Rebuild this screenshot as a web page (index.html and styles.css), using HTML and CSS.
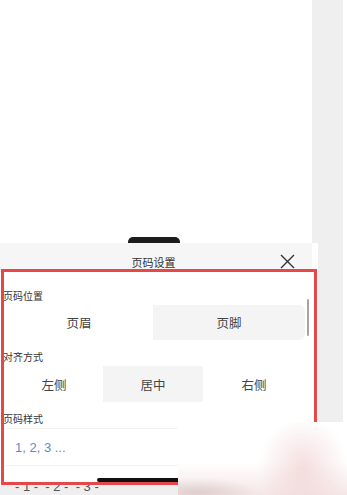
FILE: index.html
```html
<!DOCTYPE html>
<html lang="zh">
<head>
<meta charset="utf-8">
<link rel="stylesheet" href="styles.css">
</head>
<body>
<div class="page">
  <div class="top">
    <div class="pill"></div>
  </div>
  <div class="sheet">
    <div class="sheet-head">
      <span></span>
      <span class="title">页码设置</span>
      <svg class="close" width="15" height="15" viewBox="0 0 15 15"><path d="M1 1 L14 14 M14 1 L1 14" stroke="#333" stroke-width="1.4" fill="none"/></svg>
    </div>
    <div class="content">
      <div class="label">页码位置</div>
      <div class="seg seg-2">
        <div class="opt">页眉</div>
        <div class="opt on right">页脚</div>
      </div>
      <div class="label gap">对齐方式</div>
      <div class="seg seg-3">
        <div class="opt">左侧</div>
        <div class="opt on">居中</div>
        <div class="opt">右侧</div>
      </div>
      <div class="label gap">页码样式</div>
      <div class="style-row first">1, 2, 3 ...</div>
      <div class="style-row second">- 1 -&nbsp;&nbsp;- 2 -&nbsp;&nbsp;- 3 -</div>
    </div>
  </div>
  <div class="scrollbar"></div>
  <div class="frame"></div>
  <div class="home"></div>
  <div class="watermark"></div>
</div>
</body>
</html>
```
FILE: styles.css
```css
html, body {
  margin: 0;
  padding: 0;
}
body {
  width: 347px;
  height: 495px;
  overflow: hidden;
  font-family: "Noto Sans CJK SC", "Noto Sans", sans-serif;
  background: linear-gradient(to right, #ffffff 312px, #efefef 312px, #efefef 343px, #ffffff 343px);
}
.page {
  position: relative;
  width: 347px;
  height: 495px;
  overflow: hidden;
}
.top {
  height: 243px;
  display: flex;
  align-items: flex-end;
}
.pill {
  margin-left: 128px;
  width: 52px;
  height: 6px;
  background: #1c1c1c;
  border-radius: 5px 5px 0 0;
}
.sheet {
  width: 318px;
  background: #ffffff;
}
.sheet-head {
  width: 312px;
  height: 27px;
  background: #f6f6f6;
  display: grid;
  grid-template-columns: 1fr auto 1fr;
  align-items: center;
  box-sizing: border-box;
  padding: 0 17px 0 0;
}
.title {
  font-size: 11px;
  color: #333;
  line-height: 14px;
  padding-top: 10px;
  margin-left: 12px;
}
.close {
  justify-self: end;
  margin-top: 9px;
}
.content {
  padding: 19px 0 0 3px;
}
.label {
  font-size: 10px;
  line-height: 14px;
  color: #333;
}
.label.gap {
  margin-top: 10px;
}
.seg {
  margin: 2px 0 0 2px;
  width: 300px;
  display: grid;
}
.seg-2 {
  grid-template-columns: 148px 152px;
  height: 35px;
}
.seg-3 {
  grid-template-columns: 98px 100px 102px;
  height: 36px;
}
.opt {
  display: flex;
  align-items: center;
  justify-content: center;
  font-size: 12.5px;
  color: #444;
}
.opt.on {
  background: #f4f4f4;
}
.opt.right {
  border-radius: 0 6px 6px 0;
}
.style-row {
  margin-left: 2px;
  width: 312px;
  box-sizing: border-box;
  padding-left: 10px;
  display: flex;
  align-items: center;
  font-family: "Liberation Sans", Arial, sans-serif;
  font-size: 13px;
}
.style-row.first {
  margin-top: 2px;
  height: 38px;
  color: #5d8ad4;
  border-top: 1px solid #f3f3f3;
  border-bottom: 1px solid #f3f3f3;
}
.style-row.second {
  height: 30px;
  color: #555;
  padding-top: 10px;
  margin-left: -3px;
  padding-left: 15px;
  background: linear-gradient(#ffffff 19px, #efefef 19px);
}
.scrollbar {
  position: absolute;
  left: 307px;
  top: 299px;
  width: 2px;
  height: 37px;
  background: #a5a5a5;
  border-radius: 1px;
}
.frame {
  position: absolute;
  left: 1px;
  top: 269px;
  width: 316px;
  height: 216px;
  box-sizing: border-box;
  border: 3px solid #e8474a;
}
.home {
  position: absolute;
  left: 97px;
  top: 478px;
  width: 150px;
  height: 4px;
  background: #111;
  border-radius: 2px;
}
.watermark {
  position: absolute;
  left: 178px;
  top: 422px;
  width: 169px;
  height: 73px;
  background:
    radial-gradient(ellipse 45px 50px at 125px 45px, rgba(236, 196, 196, 0.55), rgba(255,255,255,0)),
    radial-gradient(ellipse 60px 14px at 20px 70px, rgba(200, 180, 180, 0.5), rgba(255,255,255,0)),
    linear-gradient(to bottom, #ffffff 55%, #f5e6e6 100%);
}
```
